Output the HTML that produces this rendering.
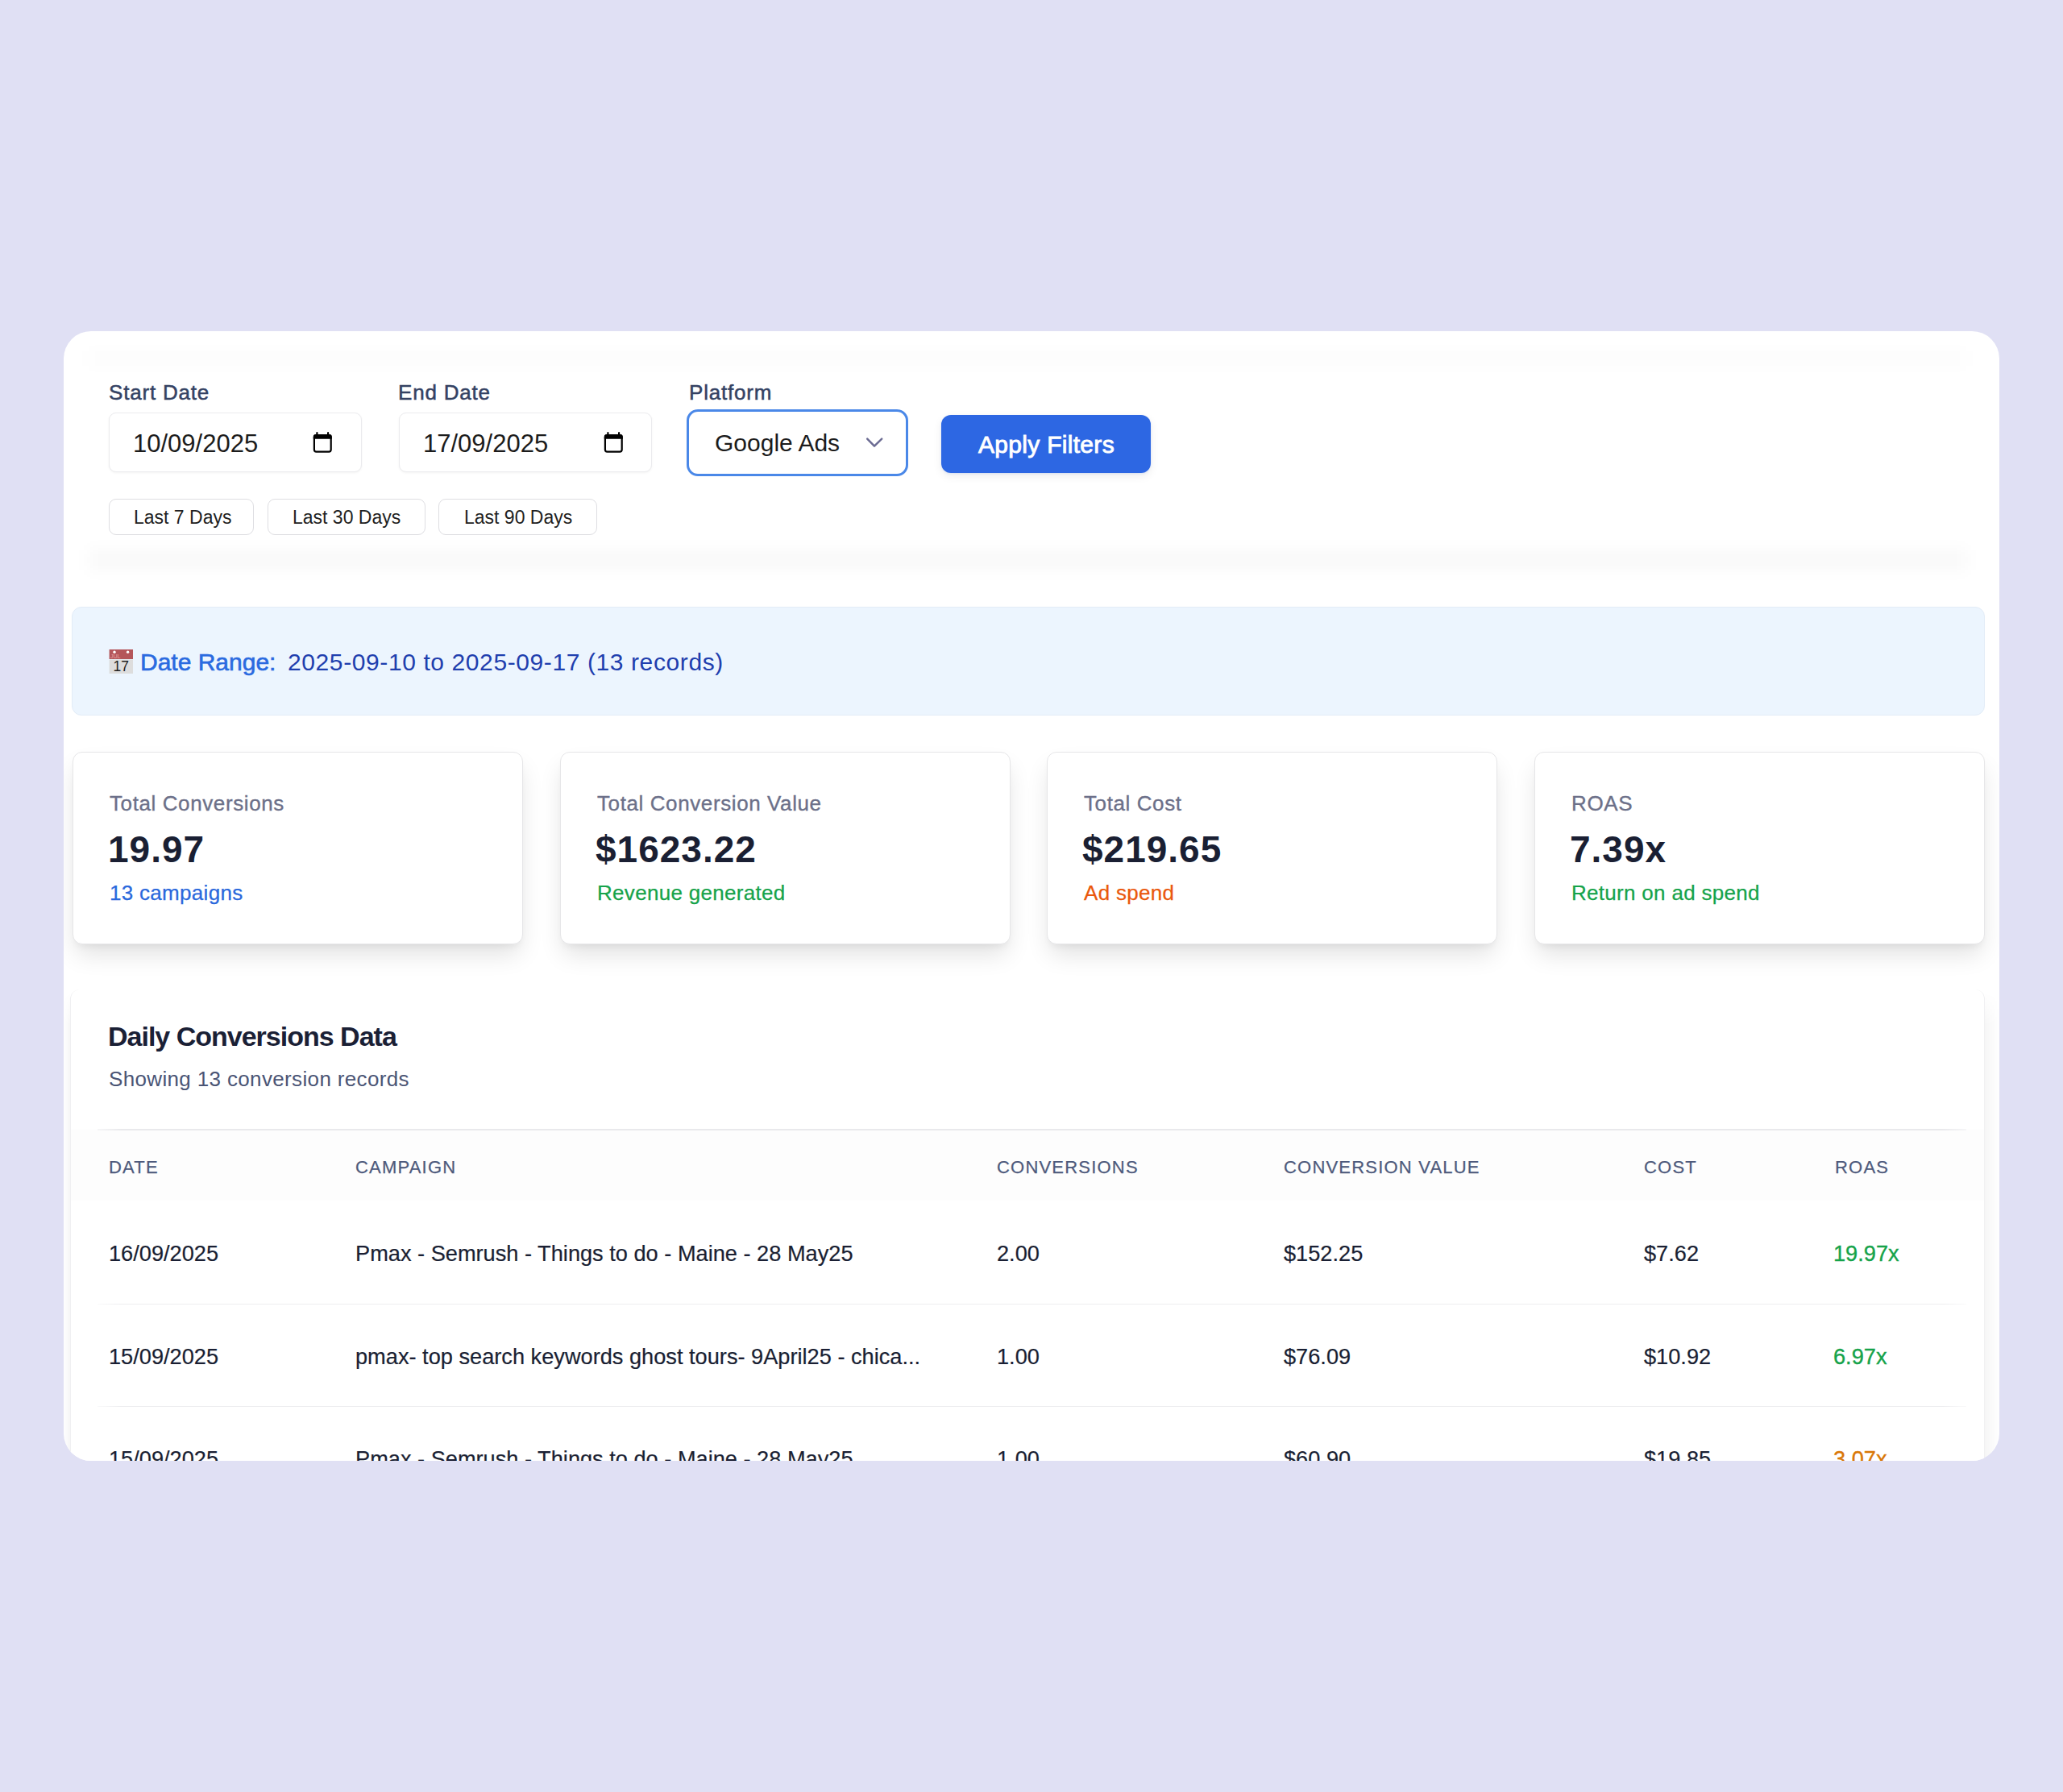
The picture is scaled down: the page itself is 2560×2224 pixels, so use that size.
<!DOCTYPE html>
<html>
<head>
<meta charset="utf-8">
<style>
html,body{margin:0;padding:0;}
body{width:2560px;height:2224px;background:#e0e0f4;position:relative;overflow:hidden;font-family:"Liberation Sans",sans-serif;}
.abs{position:absolute;}
.t{position:absolute;white-space:nowrap;line-height:1;}
#card{position:absolute;left:79px;top:411px;width:2402px;height:1402px;background:#fff;border-radius:34px;overflow:hidden;}
/* children use page coordinates: offset by card origin */
#inner{position:absolute;left:-79px;top:-411px;width:2560px;height:2224px;}
.lbl{font-size:26px;color:#344263;letter-spacing:0.8px;-webkit-text-stroke:0.5px #344263;}
.inp{position:absolute;top:512px;width:312px;height:72px;border:1.5px solid #ebebee;border-radius:9px;background:#fff;box-shadow:0 1px 3px rgba(0,0,0,0.05);}
.inptxt{font-size:30px;color:#1c1c1c;}
.dtxt{font-size:31px;color:#1c1c1c;}
.qb{position:absolute;top:619px;height:43px;border:1.5px solid #dedee2;border-radius:9px;background:#fff;}
.qbt{font-size:23px;color:#1f1f22;}
.stat{position:absolute;top:933px;box-sizing:border-box;width:559px;height:239px;border:1.5px solid #e6e6e8;border-radius:12px;background:#fff;box-shadow:0 16px 30px -4px rgba(0,0,0,0.12),0 6px 10px -4px rgba(0,0,0,0.06);}
.sl{font-size:26px;color:#6c7089;letter-spacing:0.6px;-webkit-text-stroke:0.35px #6c7089;}
.sv{font-size:46px;margin-left:-2px;letter-spacing:1px;font-weight:700;color:#1a1f33;}
.ss{font-size:26px;letter-spacing:0.3px;-webkit-text-stroke:0.25px currentColor;}
.th{font-size:22px;color:#4e5a7c;letter-spacing:1.2px;-webkit-text-stroke:0.25px #4e5a7c;}
.td{font-size:27.2px;color:#1a1f33;-webkit-text-stroke:0.2px currentColor;}
.sep{position:absolute;left:121px;width:2319px;height:1px;background:linear-gradient(to right,rgba(237,237,239,0.3),#ededef 30px,#ededef calc(100% - 30px),rgba(237,237,239,0.3));}
</style>
</head>
<body>
<div id="card"><div id="inner">

<!-- filter panel soft shadow -->


<div class="abs" style="left:110px;top:682px;width:2330px;height:26px;background:rgba(0,0,0,0.022);filter:blur(9px);"></div>
<div class="abs" style="left:110px;top:436px;width:2330px;height:18px;background:rgba(0,0,0,0.012);filter:blur(9px);"></div>
<!-- labels -->
<div class="t lbl" style="left:135px;top:474px;">Start Date</div>
<div class="t lbl" style="left:494px;top:474px;">End Date</div>
<div class="t lbl" style="left:855px;top:474px;">Platform</div>

<!-- date inputs -->
<div class="inp" style="left:135px;"></div>
<div class="t dtxt" style="left:165px;top:535px;">10/09/2025</div>
<svg class="abs" style="left:388px;top:536px" width="26" height="28" viewBox="0 0 26 28"><rect x="1.9" y="4.1" width="20.8" height="20.5" rx="2.6" fill="none" stroke="#000" stroke-width="2.2"/><path d="M0.8 6.2 Q0.8 3 4 3 L20.6 3 Q23.8 3 23.8 6.2 L23.8 8.8 L0.8 8.8 Z" fill="#000"/><path d="M5.4 1.2 L5.4 4 M19.1 1.2 L19.1 4" stroke="#000" stroke-width="2.2" stroke-linecap="round"/></svg>
<div class="inp" style="left:495px;"></div>
<div class="t dtxt" style="left:525px;top:535px;">17/09/2025</div>
<svg class="abs" style="left:749px;top:536px" width="26" height="28" viewBox="0 0 26 28"><rect x="1.9" y="4.1" width="20.8" height="20.5" rx="2.6" fill="none" stroke="#000" stroke-width="2.2"/><path d="M0.8 6.2 Q0.8 3 4 3 L20.6 3 Q23.8 3 23.8 6.2 L23.8 8.8 L0.8 8.8 Z" fill="#000"/><path d="M5.4 1.2 L5.4 4 M19.1 1.2 L19.1 4" stroke="#000" stroke-width="2.2" stroke-linecap="round"/></svg>

<!-- select -->
<div class="abs" style="left:852px;top:508px;width:269px;height:77px;border:3px solid #4a88e8;border-radius:14px;background:#fff;"></div>
<div class="t inptxt" style="left:887px;top:535px;">Google Ads</div>
<svg class="abs" style="left:1074px;top:541px" width="24" height="16" viewBox="0 0 24 16"><path d="M2.2 3.6 L11 12.6 L20.2 3.6" fill="none" stroke="#6c6c93" stroke-width="2.5" stroke-linecap="round" stroke-linejoin="round"/></svg>

<!-- apply button -->
<div class="abs" style="left:1168px;top:515px;width:260px;height:72px;border-radius:12px;background:#2d67e3;box-shadow:0 4px 12px rgba(0,0,0,0.07),0 1px 3px rgba(37,99,235,0.12);"></div>
<div class="t" style="left:1214px;top:536.5px;font-size:30px;letter-spacing:0.3px;-webkit-text-stroke:0.9px #fff;color:#fff;">Apply Filters</div>

<!-- quick buttons -->
<div class="qb" style="left:134.5px;width:178px;"></div>
<div class="t qbt" style="left:166px;top:630.5px;">Last 7 Days</div>
<div class="qb" style="left:331.5px;width:194px;"></div>
<div class="t qbt" style="left:363px;top:630.5px;">Last 30 Days</div>
<div class="qb" style="left:544px;width:194.5px;"></div>
<div class="t qbt" style="left:576px;top:630.5px;">Last 90 Days</div>

<!-- date range box -->
<div class="abs" style="left:89px;top:753px;width:2372px;height:133px;border:1px solid #e2ecf7;border-radius:12px;background:#ecf5fe;"></div>
<svg class="abs" style="left:135px;top:806px" width="31" height="31" viewBox="0 0 31 31"><rect x="0.6" y="0" width="29.4" height="12" fill="#b4565a"/><rect x="0.6" y="12.4" width="29.4" height="17.6" fill="#dddddd"/><circle cx="7" cy="3.2" r="1.7" fill="#fff"/><circle cx="23.6" cy="3.2" r="1.7" fill="#fff"/><text x="2" y="11" font-family="Liberation Sans" font-size="7" fill="#e9a3a3">JUL</text><text x="15.2" y="27" font-family="Liberation Sans" font-size="17.5" text-anchor="middle" fill="#222">17</text></svg>
<div class="t" style="left:174px;top:807px;font-size:30px;letter-spacing:0px;-webkit-text-stroke:0.6px #2a6ae0;color:#2a6ae0;">Date Range:</div>
<div class="t" style="left:357px;top:807px;font-size:30px;letter-spacing:0.6px;color:#1f3fae;">2025-09-10 to 2025-09-17 (13 records)</div>

<!-- stat cards -->
<div class="stat" style="left:90px;"></div>
<div class="t sl" style="left:136px;top:984px;">Total Conversions</div>
<div class="t sv" style="left:136px;top:1031px;">19.97</div>
<div class="t ss" style="left:136px;top:1095px;color:#2a68dc;">13 campaigns</div>

<div class="stat" style="left:695px;"></div>
<div class="t sl" style="left:741px;top:984px;">Total Conversion Value</div>
<div class="t sv" style="left:741px;top:1031px;">$1623.22</div>
<div class="t ss" style="left:741px;top:1095px;color:#16a34a;">Revenue generated</div>

<div class="stat" style="left:1299px;"></div>
<div class="t sl" style="left:1345px;top:984px;">Total Cost</div>
<div class="t sv" style="left:1345px;top:1031px;">$219.65</div>
<div class="t ss" style="left:1345px;top:1095px;color:#ea580c;">Ad spend</div>

<div class="stat" style="left:1904px;"></div>
<div class="t sl" style="left:1950px;top:984px;">ROAS</div>
<div class="t sv" style="left:1950px;top:1031px;">7.39x</div>
<div class="t ss" style="left:1950px;top:1095px;color:#16a34a;">Return on ad spend</div>

<!-- table card -->
<div class="abs" style="left:87px;top:1228px;width:2376px;height:700px;border-radius:12px;background:#fff;border-left:1.5px solid #f0f0f2;border-right:1.5px solid #f0f0f2;box-sizing:border-box;"></div>
<div class="abs" style="left:79px;top:1232px;width:8px;height:600px;background:linear-gradient(to left,rgba(0,0,0,0.035),rgba(0,0,0,0));-webkit-mask-image:linear-gradient(to bottom,transparent,#000 40px);"></div>
<div class="abs" style="left:2463px;top:1232px;width:18px;height:600px;background:linear-gradient(to right,rgba(0,0,0,0.035),rgba(0,0,0,0));-webkit-mask-image:linear-gradient(to bottom,transparent,#000 40px);"></div>
<div class="t" style="left:134px;top:1268.5px;font-size:34px;font-weight:700;letter-spacing:-1px;color:#1a2035;">Daily Conversions Data</div>
<div class="t" style="left:135px;top:1326px;font-size:26px;letter-spacing:0.35px;color:#4b5575;">Showing 13 conversion records</div>
<div class="abs" style="left:88px;top:1402px;width:2374px;height:88px;background:#fdfdfd;"></div>
<div class="sep" style="top:1401px;height:1.5px;background:linear-gradient(to right,rgba(233,233,236,0.4),#e9e9ec 30px,#e9e9ec calc(100% - 30px),rgba(233,233,236,0.4));"></div>

<div class="t th" style="left:135px;top:1438px;">DATE</div>
<div class="t th" style="left:441px;top:1438px;">CAMPAIGN</div>
<div class="t th" style="left:1237px;top:1438px;">CONVERSIONS</div>
<div class="t th" style="left:1593px;top:1438px;">CONVERSION VALUE</div>
<div class="t th" style="left:2040px;top:1438px;">COST</div>
<div class="t th" style="left:2277px;top:1438px;">ROAS</div>

<div class="t td" style="left:135px;top:1542px;">16/09/2025</div>
<div class="t td" style="left:441px;top:1542px;">Pmax - Semrush - Things to do - Maine - 28 May25</div>
<div class="t td" style="left:1237px;top:1542px;">2.00</div>
<div class="t td" style="left:1593px;top:1542px;">$152.25</div>
<div class="t td" style="left:2040px;top:1542px;">$7.62</div>
<div class="t td roas" style="left:2275px;top:1542px;color:#16a34a;-webkit-text-stroke:0.35px #16a34a;">19.97x</div>
<div class="sep" style="top:1617.5px;"></div>

<div class="t td" style="left:135px;top:1669.5px;">15/09/2025</div>
<div class="t td" style="left:441px;top:1669.5px;">pmax- top search keywords ghost tours- 9April25 - chica...</div>
<div class="t td" style="left:1237px;top:1669.5px;">1.00</div>
<div class="t td" style="left:1593px;top:1669.5px;">$76.09</div>
<div class="t td" style="left:2040px;top:1669.5px;">$10.92</div>
<div class="t td roas" style="left:2275px;top:1669.5px;color:#16a34a;-webkit-text-stroke:0.35px #16a34a;">6.97x</div>
<div class="sep" style="top:1745px;"></div>

<div class="t td" style="left:135px;top:1797px;">15/09/2025</div>
<div class="t td" style="left:441px;top:1797px;">Pmax - Semrush - Things to do - Maine - 28 May25</div>
<div class="t td" style="left:1237px;top:1797px;">1.00</div>
<div class="t td" style="left:1593px;top:1797px;">$60.90</div>
<div class="t td" style="left:2040px;top:1797px;">$19.85</div>
<div class="t td roas" style="left:2275px;top:1797px;color:#d97706;-webkit-text-stroke:0.35px #d97706;">3.07x</div>

</div></div>
</body>
</html>
